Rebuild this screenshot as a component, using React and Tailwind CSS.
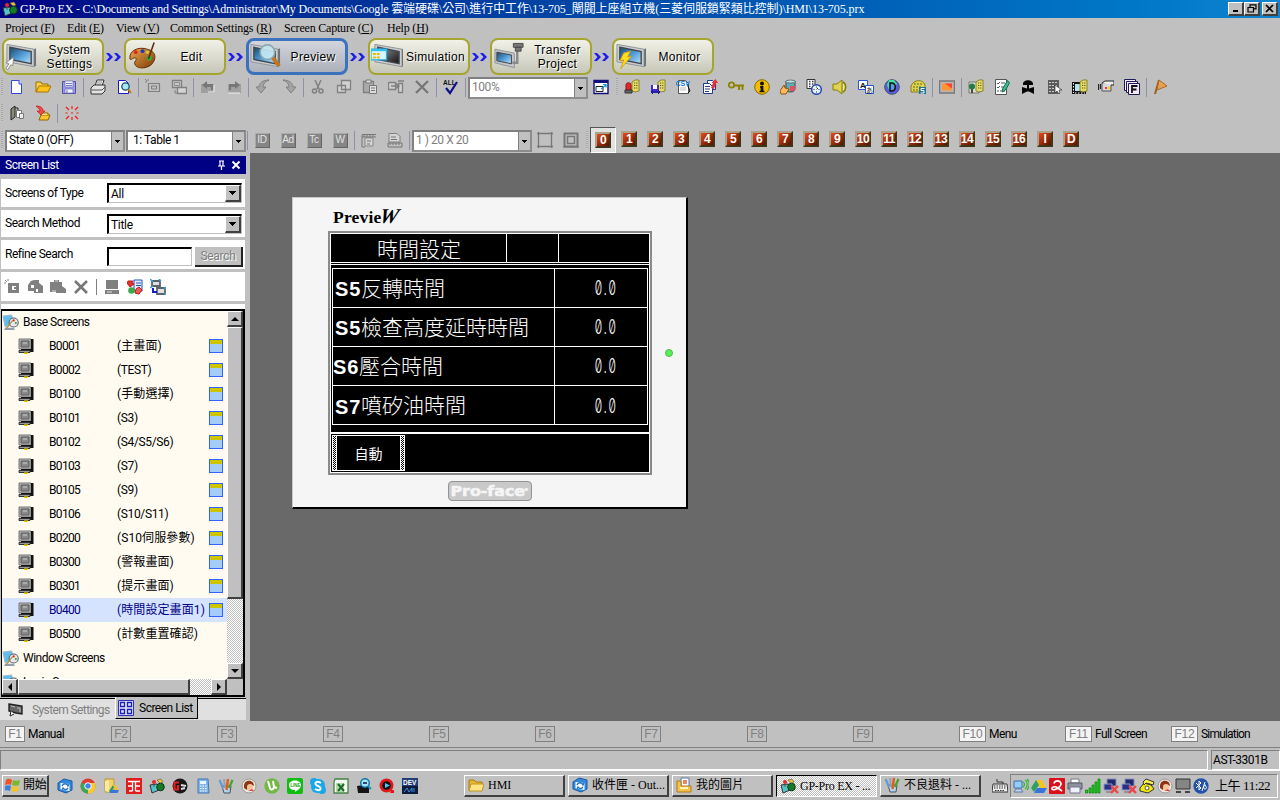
import React from 'react';

const UI = "font-['Roboto','Noto_Sans_CJK_TC',sans-serif]";
const SERIF = "font-['Liberation_Serif','Noto_Sans_CJK_TC',serif]";
const ARIAL = "font-['Liberation_Sans',sans-serif]";
const RAISED = 'border-t border-l border-white border-r-2 border-b-2 border-r-[#404040] border-b-[#404040] bg-[#c0c0c0]';
const DITHER = 'bg-[repeating-conic-gradient(#ffffff_0_25%,#c0c0c0_0_50%)] bg-[length:2px_2px]';

function Svg({ s = 16, w, h, vb = '0 0 16 16', children }) {
  return (
    <svg width={w || s} height={h || s} viewBox={vb} className="block shrink-0" fill="none">
      {children}
    </svg>
  );
}

const Page = ({ x = 2, y = 1, w = 11, h = 14, c = '#2a2ad0', f = '#fff' }) => (
  <path d={`M${x + .5} ${y + .5}h${w - 4}l3 3v${h - 4}h-${w - 1}z`} fill={f} stroke={c} />
);
const Tag = ({ x = 8, y = 0 }) => (
  <g>
    <path d={`M${x} ${y + 3}l3-2 4 0v11l-4 1-3-1z`} fill="#e4dc62" stroke="#77701c" strokeWidth=".8" />
    <path d={`M${x + 2} ${y + 4}h4M${x + 2} ${y + 6.5}h4M${x + 2} ${y + 9}h4`} stroke="#5e5815" strokeDasharray="1.2 1" />
  </g>
);

const icons = {
  new: <><Page c="#3545d5" /><path d="M10 1v4h3" stroke="#3545d5" fill="#cdd8ff" /></>,
  open: <><path d="M1 13V3h5l1 2h6v3" fill="#f8d34a" stroke="#9a6d00" /><path d="M1 13l3-6h12l-3 6z" fill="#ffc21c" stroke="#a87400" /></>,
  save: <><path d="M1.5 2.5h13v12h-13z" fill="#9b9be0" stroke="#5050a8" /><path d="M4 2h8v6H4zM4 10h8v4H4z" fill="#f4f4ff" stroke="#6969b5" strokeWidth=".7" /><path d="M5 4.5h6M5 6.5h6M6 11v3" stroke="#7777bb" /></>,
  print: <><path d="M5 7l2-6h7l-2 6z" fill="#fff" stroke="#333" /><path d="M7 3h5M6.5 5h5" stroke="#888" /><path d="M1 9l3-3h11v6l-3 3H1z" fill="#e4e4e4" stroke="#333" /><path d="M2 11h10M12 11l3-3" stroke="#555" /></>,
  preview: <><Page c="#1818c0" /><circle cx="9.5" cy="7.5" r="3.7" fill="#a5e9f5" stroke="#1a4d72" strokeWidth="1.3" /><path d="M12 10l3 4" stroke="#c47a00" strokeWidth="2" /></>,
  gnew: <><path d="M3.500 4.500h11v8h-11z" stroke="#808080" strokeWidth="1.2" /><path d="M6.500 7h5v3h-5z" stroke="#808080" /><path d="M0 0l2 2M3 0v2M0 3h2" stroke="#808080" /></>,
  gcopy: <><path d="M1.500 1.500h9v7h-9z" fill="#c8c8c8" stroke="#808080" strokeWidth="1.3" /><path d="M3.500 3.500h5v3h-5z" stroke="#909090" /><path d="M6.500 8.500h9v6h-9z" stroke="#808080" strokeWidth="1.3" fill="#d4d4d4" /><path d="M4 11v3h2" stroke="#808080" /></>,
  gback: <><path d="M1 5h13v9H1z" fill="#a0a0a0" /><path d="M7 2L2 6l5 4V8h4v3h2V5H7z" fill="#777" /><path d="M8 13h6V6" stroke="#efefef" /></>,
  gfwd: <><path d="M2 5h13v9H2z" fill="#a0a0a0" /><path d="M9 2l5 4-5 4V8H5v3H3V5h6z" fill="#777" /><path d="M2 14h12" stroke="#efefef" /></>,
  undo: <path d="M14 1C8 1 4 4 4 8H1l5 6 5-6H8c0-3 2-5 6-7z" fill="#a4a4a4" stroke="#808080" />,
  redo: <path d="M2 1c6 0 10 3 10 7h3l-5 6-5-6h3C8 5 6 3 2 1z" fill="#a4a4a4" stroke="#808080" />,
  cut: <><path d="M5 1l4 9M11 1L7 10" stroke="#808080" strokeWidth="1.5" /><circle cx="4.500" cy="12" r="2" stroke="#808080" strokeWidth="1.5" /><circle cx="11" cy="12" r="2" stroke="#808080" strokeWidth="1.5" /></>,
  copy: <path d="M5.500 1.500h9v9h-9zM1.500 6.500h8v7h-8z" fill="#d0d0d0" stroke="#808080" strokeWidth="1.3" />,
  paste: <><path d="M1.500 2.500h10v11h-10z" fill="#aaa" stroke="#808080" strokeWidth="1.3" /><path d="M4 1h5v3H4z" fill="#ddd" stroke="#777" /><path d="M7.500 6.500h7v8h-7z" fill="#ddd" stroke="#777" /><path d="M9 9h4M9 11.500h4" stroke="#777" /></>,
  dup: <><path d="M.5 3.500h7v7h-7zM10.500 4.500h4v9h-4z" fill="#cfcfcf" stroke="#808080" strokeWidth="1.3" /><path d="M3 7h7M8 4.500L11 7 8 9.500M10 2h6" stroke="#808080" strokeWidth="1.4" /></>,
  del: <path d="M2 2l12 12M14 2L2 14" stroke="#777" strokeWidth="2.300" />,
  all: <><text x="0" y="5.500" fontSize="6.500" fontWeight="700" fontFamily="Liberation Sans" fill="#111">ALL</text><path d="M3 9l4 5 7-11" stroke="#10108a" strokeWidth="2.200" /></>,
  ext: <><path d="M1 1.500h14v13H1z" fill="#fff" stroke="#10107c" strokeWidth="1.400" /><path d="M1 1h14v3H1z" fill="#10107c" /><path d="M3 7.500h7v5H3z" stroke="#222" /><path d="M8 10l5-4M10 5.500h3v3" stroke="#1094d0" strokeWidth="1.200" /></>,
  alarm: <><Tag /><path d="M2 11V6c0-3 5-3 5 0v5z" fill="#e32828" stroke="#8e1010" /><path d="M1 11h7v3H1z" fill="#666" stroke="#333" /></>,
  savetag: <><Tag /><path d="M1 6h8v8H1z" fill="#4228d8" /><path d="M3 6h4v4H3z" fill="#fff" /><path d="M1 13h9M3 11l-2 2 2 2M8 11l2 2-2 2" stroke="#14147a" /></>,
  csv: <><Page c="#555" /><path d="M4 9h6M4 11h6" stroke="#bbb" /><path d="M11 5l3 7-2 2" stroke="#111" /><text x="-.5" y="6.500" fontSize="7" fontWeight="700" fontFamily="Liberation Sans" fill="#0878d8">CSV</text></>,
  pages: <><Page x={5} y={1} w={9} h={10} c="#223a88" /><Page x={1} y={4} w={10} h={11} c="#223a88" /><path d="M3 7.500h5M3 10h5M3 12.500h4" stroke="#223a88" /><path d="M9 9l2-5-1.500 0 4-4 2.500 4h-2l-2 6z" fill="#f03030" /></>,
  key: <><circle cx="3.500" cy="6" r="2.700" stroke="#8c8400" strokeWidth="1.800" /><path d="M6 6.500h10M11 7v4M14.500 7v4" stroke="#8c8400" strokeWidth="2" /></>,
  info: <><circle cx="8" cy="8" r="7.300" fill="#f0bd00" stroke="#8b6a00" /><circle cx="8" cy="4.500" r="2" fill="#111" /><path d="M8 7v6" stroke="#111" strokeWidth="2.800" /><path d="M5.500 12.500h5M6 8h2" stroke="#111" strokeWidth="1.500" /></>,
  hand: <><path d="M6 2h9v8c0 4-9 4-9 0z" fill="#5faeb4" stroke="#444" /><ellipse cx="10.500" cy="2.500" rx="4.500" ry="1.500" fill="#b8e4e6" stroke="#555" strokeWidth=".7" /><path d="M10 7h5v5h-5z" fill="#e0505e" /><path d="M0 12l4-6 1 3 4 1-3 5H1z" fill="#ffb85b" stroke="#8d5314" /></>,
  clock: <><path d="M1 .5h8v9H1z" fill="#fff" stroke="#333" /><path d="M3 2.500h1.500M6 2.500h1.500M3 5h1.500M6 5h1.500M3 7.500h1.500" stroke="#333" strokeWidth="1.300" /><circle cx="10.500" cy="10.500" r="4.800" fill="#e8f1ff" stroke="#2348b7" strokeWidth="1.500" /><path d="M10.500 7.500v1M10.500 12.500v1M7.500 10.500h1M12.500 10.500h1M10.500 10.500l1.500-1.500" stroke="#333" /></>,
  speaker: <><path d="M1 5h4l5-4v14l-5-4H1z" fill="#dfd450" stroke="#847a08" /><path d="M11 3c3.500 2 3.500 8 0 10" fill="#f6eb85" stroke="#847a08" strokeWidth="1.500" /></>,
  lang: <><path d="M.5 1.500h9v9h-9z" fill="#fff" stroke="#2457dc" /><path d="M7.500 6.500h8v8h-8z" fill="#fff" stroke="#2457dc" /><text x="2" y="8.500" fontSize="8" fontWeight="700" fontFamily="Liberation Sans" fill="#111">A</text><text x="8" y="13.500" fontSize="7" fontFamily="Noto Sans CJK JP" fill="#111">あ</text></>,
  globe: <><circle cx="8" cy="8" r="7.300" fill="#5b5bed" stroke="#445066" /><path d="M5 1l5 0 3 4-4 6-4 0-2-5z" fill="#43dfa0" /><path d="M6 4v8h1.500c5 0 5-8 0-8z" fill="#5f9bd9" stroke="#111" strokeWidth="1.500" /></>,
  dial: <><path d="M1 7c3-7 12-7 14-1v7H1z" fill="#ded452" stroke="#857d13" /><path d="M4 5h8M3 8h8M3 11h5" stroke="#6d6610" strokeDasharray="2 1" /><path d="M9 8h7v7H9z" fill="#246f98" /><path d="M14.500 9.500h-3.500v2h3v2.500h-3.500" stroke="#fff" /></>,
  orange: <><path d="M.5 2h15v12H.5z" fill="#b6b6b6" stroke="#777" strokeWidth="1.500" /><path d="M3 4.500h10v7H3z" fill="#ff9430" /><path d="M6 4.500h7v5z" fill="#ff4038" /></>,
  treetag: <><path d="M1 3h10v11H1z" fill="#d2e0dc" stroke="#777" /><path d="M4 9v5" stroke="#5e4a18" strokeWidth="2" /><circle cx="4" cy="7.500" r="3" fill="#267b43" /><Tag /></>,
  note: <><path d="M1.500.5h11v15h-11z" fill="#fff" stroke="#555" /><path d="M3 4l1 1 2-2M7 4h4M3 8l1 1 2-2M7 8h3M3 12h2M6 12h5" stroke="#555" /><path d="M13.500 1.500l-5 8.500 0 3 3-2 4-7z" fill="#42b88d" stroke="#08734e" /></>,
  valve: <path d="M3 5c0-5 10-5 10 0v1H9v3.500L14 8v7l-5-2.500H7L2 15V8l5 1.500V6H3z" fill="#050505" />,
  keypad: <><path d="M2 1h11v14H2z" fill="#5c5c5c" /><path d="M3 3.500h9M3 6.500h9M3 9.500h6M3 12.500h6" stroke="#c8c8c8" strokeDasharray="2 1" /><path d="M9 6v8l2-2 2 3 1-1-1-3h3z" fill="#fff" stroke="#333" strokeWidth=".7" /></>,
  film: <><path d="M0 3h14v12H0z" fill="#111" /><path d="M3 5h7v7H3z" fill="#b9e2e9" /><path d="M1.500 4v10" stroke="#fff" strokeDasharray="1.500 1.500" /><path d="M3 14h10" stroke="#fff" strokeDasharray="1.500 1.500" /><Tag x={8} /></>,
  camera: <><path d="M4 4h9v8H4z" fill="#d8d8d8" stroke="#555" /><path d="M4 4l3-2h9v4h-3" fill="#eee" stroke="#222" /><path d="M0.500 5v6M2.500 5v5" stroke="#222" strokeWidth="1.200" /><path d="M7 9h2" stroke="#f33" strokeWidth="2" /><path d="M10 9h2" stroke="#fc0" strokeWidth="2" /></>,
  fbox: <><path d="M.5.5h11v11H.5z" fill="#f8e9f8" stroke="#1b1b57" /><path d="M2.500 2.500h11v11h-11z" fill="#f8e9f8" stroke="#1b1b57" /><path d="M4.500 4.500h11v11h-11z" fill="#f8e9f8" stroke="#1b1b57" /><path d="M8 14V7h5.500M8 10.500h4.500" stroke="#111" strokeWidth="1.800" /></>,
  flag: <><path d="M6 1L2 15" stroke="#9e5d22" strokeWidth="2" /><path d="M6 1l8 6-10 4z" fill="#eaa050" stroke="#a66b28" /></>,
  book: <><path d="M2 4l4-3v11l-4 3z" fill="#8b8b73" stroke="#222" /><path d="M6 3h3v3" stroke="#222" /><path d="M7.500 5.500h5v7h-5z" fill="#fff" stroke="#777" /><path d="M10.500 8.500h4v5h-4z" fill="#eee" stroke="#777" /></>,
  redopen: <><path d="M4 15l2-5h9l-2 5z" fill="#ffc72c" stroke="#8d6400" /><path d="M6 10V8h7v2" fill="#ffe98b" stroke="#8d6400" /><path d="M1 1c5 0 7 2 7 5h2l-4 4-4-4h3C5 4 3 3 1 1z" fill="#f24848" stroke="#c41414" strokeWidth=".7" /></>,
  star: <path d="M8 1v3M8 12v3M1.500 8h2M12.500 8h2M2 2l3 3M14 2l-3 3M2 14l3-3M14 14l-3-3M7 8h2" stroke="#f01818" strokeWidth="1.200" />,
  ruler1: <><path d="M4 6h8v8H4z" fill="#d4d4d4" stroke="#888" /><path d="M1 2.500h14M1 5h14" stroke="#777" /><path d="M3 3v2M6 3v2M9 3v2M12 3v2M1 3v12h3M6 9h4M6 12h3" stroke="#777" /></>,
  ruler2: <><path d="M2 1.500h8l3 3V10H2z" fill="#d4d4d4" stroke="#808080" /><path d="M4 5h5M4 7.500h6" stroke="#777" /><path d="M1 11h14v4H1zM3 11v2M6 11v2M9 11v2M12 11v2" stroke="#777" /></>,
  frame1: <path d="M1.500 0v16M14.500 0v16M0 1.500h16M0 14.500h16" stroke="#777" strokeWidth="1.300" />,
  frame2: <><path d="M1.500 1.500h13v13h-13z" stroke="#777" strokeWidth="2" /><path d="M4.500 4.500h7v7h-7z" stroke="#777" strokeWidth="1.500" /><path d="M0 15h16" stroke="#777" /></>,
};

const Cell = ({ n }) => <div className="flex h-6 w-[26px] shrink-0 items-center justify-center"><Svg>{icons[n]}</Svg></div>;
const Sep = () => <div className="flex h-[19px] w-[3px] shrink-0 justify-end pr-px"><div className="w-px bg-[#9090a8]" /></div>;
const Grip = ({ wide }) => (
  <div className={wide ? 'flex w-[5px] shrink-0 justify-center' : 'flex w-1 shrink-0 justify-center'}>
    <div className="h-[18px] w-0.5 bg-[repeating-linear-gradient(#a6a6a6_0_1px,#c8c8c8_1px_2px)]" />
  </div>
);

function Bar({ items }) {
  return items.map((n, i) => (n === '|' ? <Sep key={i} /> : n === ':' ? <Grip key={i} wide /> : <Cell key={i} n={n} />));
}

const Down = () => <svg width="7" height="4" viewBox="0 0 7 4" shapeRendering="crispEdges"><path d="M0 0h7L3.500 4z" fill="#000" /></svg>;

function Combo({ text, gray, className = 'mt-0.5 w-[120px]', textClass = 'pl-0.5' }) {
  return (
    <div className={`${className} flex h-[22px] shrink-0 border-2 border-[#808080] border-r-[#8c8c8c] border-b-[#8c8c8c] bg-white`}>
      <div className={`${textClass} flex-1 text-[12px] leading-[16px] tracking-[-0.45px] whitespace-nowrap ${gray ? 'text-[#808080]' : 'text-black'}`}>{text}</div>
      <div className="flex w-3 items-center justify-center border-l border-[#808080] bg-[#c0c0c0]"><svg width="5" height="3" viewBox="0 0 5 3" shapeRendering="crispEdges"><path d="M0 0h5L2.500 3z" fill="#000" /></svg></div>
    </div>
  );
}

const Monitor = ({ dark }) => (
  <>
    <path d="M2 2l28 5v18L2 20z" fill="#c9cdd0" stroke="#8f9498" />
    <path d="M30 7l2-1v18l-2 1z" fill="#6d7275" />
    <path d="M5 5l22 4.500v12.500L5 17.500z" fill={dark ? 'url(#scrDark)' : 'url(#scrBlue)'} stroke="#42484d" strokeWidth="1.400" />
  </>
);

const modeIcons = {
  sys: <><Monitor /><path d="M1 27l3-5-3-1 8-6-1 9-2-1-3 5z" fill="#fff" stroke="#777" strokeWidth=".8" /></>,
  edit: <><path d="M3 17C2 8 12 4 21 7c9 2 10 10 4 16-6 5-16 4-17-1-1-3 3-4 1-6-2-1-5 3-6 1z" fill="url(#wood)" stroke="#643000" /><circle cx="9" cy="10" r="2" fill="#e02818" /><circle cx="16" cy="9" r="2" fill="#2038c4" /><circle cx="21" cy="10" r="1.800" fill="#d8c728" /><circle cx="23" cy="16" r="2.600" fill="#23b83a" /><path d="M28 0l-6 17" stroke="#5a2b16" strokeWidth="1.600" /></>,
  prev: <><Monitor /><path d="M24 15l7 9" stroke="#c2751a" strokeWidth="4" /><circle cx="19" cy="10" r="7.500" fill="#c7eaf2" fillOpacity=".9" stroke="#8ca8b4" strokeWidth="1.700" /></>,
  sim: <><g transform="translate(2 0)"><Monitor dark /></g><path d="M0 7h16v11H0z" fill="#d8f4ff" stroke="#25aee8" strokeWidth="1.300" /><path d="M0 7h16v2H0z" fill="#2ac3f2" /><path d="M2 11h3v2H2zM6 11h3v2H6zM2 14.500h3v2H2zM6 14.500h3v2H6z" fill="#e9ba00" /></>,
  xfer: <><path d="M2 7l20 4v15L2 21z" fill="#c3c7cb" stroke="#8f9498" /><path d="M4 10l15 3v9L4 19z" fill="url(#scrBlue)" stroke="#444" /><path d="M20 21h5V9" stroke="#8a8a8a" strokeWidth="2.500" /><path d="M21 1h10v4H21zM23 5h6v4h-6z" fill="#777" stroke="#4b4b4b" /></>,
  mon: <><Monitor /><path d="M9 11l7-2-3 6 4-1-11 13 3-9-4 1z" fill="#ffde22" stroke="#d59900" strokeWidth=".8" /></>,
};

function Mode({ icon, lines, active }) {
  return (
    <div className={`flex h-[37px] w-[102px] shrink-0 items-center rounded-lg ${active ? 'border-[3px] border-[#3b72bd] bg-linear-to-b from-[#d2d5dc] to-[#adb1bb]' : 'border-2 border-[#a5a52f] bg-linear-to-b from-[#f1f1e7] to-[#c7c7b9] pl-px'}`}>
      <svg width="32" height="29" viewBox="0 0 33 29" fill="none" className="shrink-0">{modeIcons[icon]}</svg>
      <div className={`${ARIAL} flex-1 text-center text-[12px] leading-[14px] tracking-[0.3px] whitespace-nowrap text-black [text-shadow:1px_1px_0_#fff]`}>
        {lines.map((l) => <div key={l}>{l}</div>)}
      </div>
    </div>
  );
}

const Chevron = () => (
  <div className="flex w-5 shrink-0 items-center justify-center">
    <svg width="16" height="10" viewBox="0 0 16 10" fill="none"><path d="M0 1h3l4 4-4 4H0l3.500-4zM8 1h3l4 4-4 4H8l3.500-4z" fill="#1c1ce8" /></svg>
  </div>
);

const NumBtn = ({ t, on }) => (
  <div className={`flex h-[26px] w-[26px] shrink-0 items-center justify-center pb-0.5 ${on ? 'border border-white border-t-[#555] border-l-[#555] bg-[#e2e2e0] pb-px' : ''}`}>
    <div className={`${ARIAL} flex h-4 w-4 items-center justify-center border-2 border-t-[#aaa28a] border-l-[#aaa28a] border-r-[#3f3518] border-b-[#3f3518] bg-linear-to-br from-[#e84c18] to-[#581200] text-[12px] leading-none font-bold tracking-[-0.5px] text-white`}>{t}</div>
  </div>
);

const GrayBtn = ({ t }) => (
  <div className="flex w-[26px] shrink-0 items-center justify-center">
    <div className={`${ARIAL} flex h-[15px] w-[15px] items-center justify-center border border-t-[#aaa] border-l-[#aaa] border-r-[#666] border-b-[#666] bg-[#858585] text-[10px] leading-none tracking-[-0.3px] text-[#e4e4e4]`}>{t}</div>
  </div>
);

const ROWS = [
  ['B0001', '(主畫面)'], ['B0002', '(TEST)'], ['B0100', '(手動選擇)'], ['B0101', '(S3)'], ['B0102', '(S4/S5/S6)'],
  ['B0103', '(S7)'], ['B0105', '(S9)'], ['B0106', '(S10/S11)'], ['B0200', '(S10伺服參數)'], ['B0300', '(警報畫面)'],
  ['B0301', '(提示畫面)'], ['B0400', '(時間設定畫面1)'], ['B0500', '(計數重置確認)'],
];

const PcIcon = () => (
  <Svg><path d="M1 1h12v10H1z" fill="#b6b6b6" stroke="#777" /><path d="M13 1h2.500v13H3v-3h10z" fill="#111" /><path d="M3 3h8v6H3z" fill="#8a8a8a" stroke="#5a5a5a" /><path d="M5 5h4" stroke="#ccc" /><path d="M1 12.500h11v2H1z" fill="#999" stroke="#333" /><path d="M6 15.200h4" stroke="#e4d000" strokeWidth="1.600" /></Svg>
);
const GroupIcon = () => (
  <Svg s={17}><path d="M1 2l8-1 2 8-8 3z" fill="#5abff0" stroke="#9bb8c9" /><path d="M3 13h8l1 2H2z" fill="#8ea0b0" /><circle cx="11" cy="8" r="4.300" fill="#e9e9e9" stroke="#58616b" /><circle cx="11" cy="6" r="1" fill="#d22" /><circle cx="13" cy="8.500" r="1" fill="#2a4" /><path d="M4 14l6-8" stroke="#c88630" /></Svg>
);
const Group = ({ t }) => (
  <div className="flex h-6 shrink-0 items-center"><GroupIcon /><span className="ml-1 text-[12px] tracking-[-0.5px] whitespace-nowrap">{t}</span></div>
);

const ScrollBtn = ({ d }) => (
  <div className={`flex h-4 w-4 shrink-0 items-center justify-center ${RAISED}`}>
    <svg width="8" height="8" viewBox="0 0 8 8"><path d={d} fill="#000" /></svg>
  </div>
);

const PanelSelect = ({ label, value }) => (
  <div className="flex h-full items-center">
    <span className="w-[106px] pb-px pl-1 text-[12px] tracking-[-0.45px]">{label}</span>
    <div className="flex h-5 w-[135px] border-t-2 border-l-2 border-r border-b border-t-black border-l-black border-r-[#c0c0c0] border-b-[#c0c0c0] bg-white">
      <span className="flex-1 pl-0.5 text-[12px] leading-[18px] tracking-[-0.3px]">{value}</span>
      <div className={`flex w-4 items-center justify-center ${RAISED}`}><Down /></div>
    </div>
  </div>
);

function SidePanel() {
  return (
    <div className="flex w-[250px] shrink-0 flex-col bg-[#c0c0c0] pt-[3px]">
      <div className="flex h-[18px] w-[246px] items-center bg-[#000084] pl-[5px] text-[12px] tracking-[-0.5px] text-white">
        <span className="flex-1">Screen List</span>
        <svg width="24" height="10" viewBox="0 0 24 10" fill="none"><path d="M2 1h5M3 1v5M6 1v5M1 6h7M4.500 6v4" stroke="#fff" strokeWidth="1.200" /><path d="M15.500 1.500l7 7M22.500 1.500l-7 7" stroke="#fff" strokeWidth="2" /></svg>
        <span className="w-[5px]" />
      </div>
      <div className="mt-[5px] ml-px flex w-[244px] flex-col gap-[3px]">
        <div className="h-7 bg-white"><PanelSelect label="Screens of Type" value="All" /></div>
        <div className="h-[27px] bg-white"><PanelSelect label="Search Method" value="Title" /></div>
        <div className="flex h-[29px] items-center bg-white">
          <span className="w-[106px] pb-0.5 pl-1 text-[12px] tracking-[-0.45px]">Refine Search</span>
          <div className="mt-1 h-[19px] w-[85px] border-t-2 border-l-2 border-r border-b border-t-black border-l-black border-r-[#c0c0c0] border-b-[#c0c0c0]" />
          <div className="mt-1 ml-[3px] flex h-5 w-12 items-center justify-center border-r-2 border-b-2 border-r-[#222] border-b-[#222] bg-[#c0c0c0] text-[12px] tracking-[-0.3px] text-[#808080] [text-shadow:1px_1px_0_#fff]">Search</div>
        </div>
        <div className="flex h-[29px] items-center gap-[7px] bg-white pl-[3px]">
          <Svg><path d="M4 4h11v10H4z" fill="#808080" /><path d="M8 7h4v4H8z" fill="#fff" /><path d="M10 8h2v2h-2z" fill="#808080" /><path d="M1 1l2 2M4 0v2M0 4h2" stroke="#808080" /></Svg>
          <Svg><path d="M4 2l3-1h5v3l4 3v7H7v-2H1V6z" fill="#808080" /><path d="M4 6h3v3H4zM9 10h2v3H9z" fill="#fff" /></Svg>
          <Svg><path d="M0 3h4V1h5v2h3v4l4 3v4H6v-1H0z" fill="#808080" /><path d="M5 2h3M2 12h4" stroke="#ddd" /></Svg>
          <Svg><path d="M2 2l12 12M14 2L2 14" stroke="#777" strokeWidth="2.600" /></Svg>
          <div className="h-4 w-px bg-[#808080]" />
          <Svg><path d="M2 1h12v9H2zM1 11h14v4H1z" fill="#808080" /><path d="M3 13h5" stroke="#ddd" /></Svg>
          <Svg><path d="M7 1h8v11H7z" fill="#e6efff" stroke="#2253b0" /><path d="M9 4h5M9 6.500h5" stroke="#2253b0" /><path d="M1 2l5 0-1 2 2 1-4 3-3-4z" fill="#e83030" stroke="#c01818" /><path d="M9 10l3-2 3 3-3 4-4-1z" fill="#f05858" stroke="#c01818" /><circle cx="4.500" cy="11.500" r="3.300" fill="#3ba84b" /></Svg>
          <Svg><path d="M2 3l1-1h6l1 1v4H2zM7 9h7l1 1v4l-1 1H7z" fill="#e0e0e0" stroke="#59646b" strokeWidth="1.800" /><path d="M0 0l3 3M9 0l2 2M0 9l3-2M16 8l-2 2M16 16l-2-1" stroke="#2a9ce0" strokeWidth="1.500" /><path d="M3 9v4h4" stroke="#1818d0" strokeWidth="2" /></Svg>
        </div>
      </div>
      <div className="mt-[3px] ml-px h-[5px] w-[244px] bg-white" />
      <div className="ml-px flex h-[388px] w-[244px] flex-col border-t-2 border-r-2 border-b-2 border-l border-black">
        <div className="flex h-[368px]">
          <div className="w-[226px] overflow-hidden bg-[#fffbf0]">
            <div className="-mt-px h-6"><Group t="Base Screens" /></div>
            {ROWS.map(([id, name], i) => (
              <div key={id} className={`flex h-6 items-center pl-4 text-[12px] whitespace-nowrap ${i === 11 ? 'bg-[#d6e3ff] text-[#000084]' : ''}`}>
                <PcIcon />
                <span className="ml-[15px] w-[68px] tracking-[-0.65px]">{id}</span>
                <span className={/^[ -~]+$/.test(name) ? 'w-[92px] tracking-[-0.35px]' : 'w-[92px] tracking-[0.1px]'}>{name}</span>
                {i < 12 && <div className="flex h-[14px] w-[14px] shrink-0 flex-col border border-[#3163ff] bg-[#a5cbf7]"><div className="h-1 bg-[#cec700]" /></div>}
              </div>
            ))}
            <Group t="Window Screens" />
            <Group t="Logic Screens" />
          </div>
          <div className={`flex w-4 flex-col ${DITHER}`}>
            <ScrollBtn d="M0 6h8L4 2z" />
            <div className={`h-[272px] ${RAISED}`} />
            <div className="flex-1" />
            <ScrollBtn d="M0 2h8L4 6z" />
          </div>
        </div>
        <div className="flex h-4">
          <div className={`flex w-[226px] ${DITHER}`}>
            <ScrollBtn d="M6 0v8L2 4z" />
            <div className={`w-[172px] ${RAISED}`} />
            <div className="flex-1" />
            <ScrollBtn d="M2 0v8l4-4z" />
          </div>
          <div className="w-4 bg-[#c0c0c0]" />
        </div>
      </div>
      <div className="mt-px flex h-[22px] w-[246px] bg-[#e0e0e0] text-[12px]">
        <div className="flex w-[115px] items-center border-t border-black pl-2 tracking-[-0.6px] text-[#808080]">
          <Svg><path d="M1 2l13 2v8L8 11 1 9z" fill="#666" stroke="#222" strokeWidth="1.400" /><path d="M3 4l4 1M9 6h3v4" stroke="#bbb" /><path d="M3 9l-1 5 4-2" fill="#fff" stroke="#222" /></Svg>
          <span className="ml-2 whitespace-nowrap">System Settings</span>
        </div>
        <div className="-mt-px flex h-[22px] w-[83px] items-center border-r border-b border-l border-black border-l-white bg-[#c0c0c0] pl-0.5">
          <Svg><path d="M.5.5h15v15H.5z" fill="#dfe4ff" stroke="#3030b8" /><path d="M2.500 2.500h4v4h-4zM9.500 2.500h4v4h-4zM2.500 9.500h4v4h-4zM9.500 9.500h4v4h-4z" stroke="#2020b0" strokeWidth="1.300" /></Svg>
          <span className="ml-[5px] tracking-[-0.5px] whitespace-nowrap">Screen List</span>
        </div>
        <div className="flex-1 border-t border-black" />
      </div>
    </div>
  );
}

const LINES = [['S5', '反轉時間'], ['S5', '檢查高度延時時間'], ['S6', '壓合時間'], ['S7', '噴矽油時間']];

function Device() {
  return (
    <div className="flex h-[312px] w-[396px] flex-col items-center border-t border-l border-r-2 border-b-2 border-t-[#c8c8c8] border-l-[#c8c8c8] border-r-black border-b-black bg-[#f5f5f5]">
      <div className="flex h-[33px] w-full items-end pb-[3px] pl-10">
        <div className="flex items-baseline font-['Liberation_Serif',serif] text-[17.500px] leading-[22px] font-bold text-black">
          <span className="inline-block tracking-[0.2px]">Previe</span><span className="-ml-1 inline-block origin-bottom -skew-x-12 text-[21px] leading-[18px] italic">W</span>
        </div>
      </div>
      <div className="ml-px w-[324px] border-2 border-[#8a8a8a] bg-white p-px">
        <div className="flex h-[238px] flex-col bg-black text-white">
          <div className="flex h-[29px] border-b border-white font-['Noto_Sans_CJK_TC',sans-serif] text-[21px] leading-[28px] font-light">
            <div className="w-[176px] border-r border-white pl-px text-center">時間設定</div>
            <div className="w-[52px] border-r border-white" />
          </div>
          <div className="mt-px h-px shrink-0 bg-white" />
          <div className="mx-px mt-[3px] h-[157px] border border-white">
            {LINES.map(([a, b], i) => (
              <div key={i} className={`flex h-[39px] ${i < 3 ? 'border-b border-white' : ''}`}>
                <div className={`flex w-[222px] items-center border-r border-white whitespace-nowrap ${i === 2 ? '' : 'pl-0.5'}`}>
                  <span className={`${ARIAL} mt-0.5 text-[20px] leading-none font-bold tracking-[0.8px]`}>{a}</span>
                  <span className="mb-0.5 font-['Noto_Sans_CJK_TC',sans-serif] text-[21px] leading-none font-light">{b}</span>
                </div>
                <div className="flex flex-1 items-center justify-center pl-[11px]"><span className="inline-block scale-x-[0.6] font-['Inter',sans-serif] text-[20px] leading-none font-light tracking-[3px] slashed-zero">0.0</span></div>
              </div>
            ))}
          </div>
          <div className="mt-[7px] h-0.5 shrink-0 bg-white" />
          <div className="flex flex-1 p-px">
            <div className="flex h-9 w-[73px] border border-white">
              <div className="w-1 border-r border-white bg-[repeating-conic-gradient(#fff_0_25%,#000_0_50%)] bg-[length:2px_2px]" />
              <div className="flex flex-1 items-center justify-center font-['Noto_Sans_CJK_TC',sans-serif] text-[14px] leading-none">自動</div>
              <div className="w-1 border-l border-white bg-[repeating-conic-gradient(#fff_0_25%,#000_0_50%)] bg-[length:2px_2px]" />
            </div>
          </div>
        </div>
      </div>
      <div className="mt-[6px] flex h-5 w-[84px] items-center justify-center rounded border border-[#949494] bg-[#c9c9c9] font-['DejaVu_Sans',sans-serif] text-[14px] leading-none font-bold text-[#f5f5f5]"><span className="inline-block scale-x-[1.13] whitespace-nowrap [-webkit-text-stroke:0.6px_#f5f5f5]">Pro-face<span className="-ml-px align-[4px] text-[7px]">•</span></span></div>
    </div>
  );
}

const FKEYS = [['F1', 'Manual', 1], ['F2'], ['F3'], ['F4'], ['F5'], ['F6'], ['F7'], ['F8'], ['F9'], ['F10', 'Menu', 1], ['F11', 'Full Screen', 1], ['F12', 'Simulation', 1]];

const GpIcon = ({ s = 16 }) => (
  <Svg s={s}><path d="M1 7l7-1 2 6-7 3z" fill="#54c4cc" stroke="#333" /><circle cx="5" cy="4" r="2" fill="#e32929" /><circle cx="11.500" cy="9" r="3.800" fill="#187a28" stroke="#083d12" /><path d="M8 2l4-1 2 3-3 1z" fill="#f0c228" stroke="#555" strokeWidth=".6" /><path d="M5 6v3" stroke="#555" /></Svg>
);
const Pens = () => <Svg><path d="M4 8h9l-1 7H6z" fill="#b4d2e6" stroke="#456" /><path d="M5 10L1.500 2" stroke="#5f9ad8" strokeWidth="2.200" /><path d="M7 10L6 1" stroke="#9a9fa8" strokeWidth="2" /><path d="M8.500 12l1.500-11" stroke="#e05c20" strokeWidth="2.400" /><path d="M11 10l3.500-8" stroke="#48a030" strokeWidth="2.200" /></Svg>;
const Mail = () => <Svg><path d="M1 5l6-4 8 2v9l-6 3-8-3z" fill="#2f87de" stroke="#175ca4" /><path d="M3.500 5l9 1v7l-9-1.500z" fill="#fff" /><path d="M5 8c1-3 5-3 6 0l1-2M11 10c-1 2-4 2-5 0l-1 2" stroke="#2671be" strokeWidth="1.300" /></Svg>;
const Folder = () => <Svg><path d="M1 13V3h5l2 2h6v8z" fill="#e8b730" stroke="#a77b10" /><path d="M3 7h13l-2 7H1z" fill="#ffe382" stroke="#c29420" /></Svg>;
const Girl = () => <Svg><circle cx="8" cy="8" r="7" fill="#f3e7dc" stroke="#999" /><path d="M3 8c0-7 10-7 10 0l-2-1-4 1-1 4-3-2z" fill="#8b3514" /><circle cx="9" cy="9" r="3" fill="#f5c49a" /><path d="M7 13l4-2 2 2z" fill="#d44" /></Svg>;

const quick = [
  <Mail />,
  <Svg><circle cx="8" cy="8" r="7.500" fill="#e03a2c" /><path d="M8 8L1.500 4.500A7.500 7.500 0 0 0 8 15.500z" fill="#38a852" /><path d="M8 8v7.500A7.500 7.500 0 0 0 15 5H8z" fill="#fbcb2c" /><circle cx="8" cy="8" r="3.300" fill="#4084ee" stroke="#fff" /></Svg>,
  <Svg><path d="M2 1h9v13H2z" fill="#f1d271" stroke="#bc9630" /><path d="M2 3l4-1v12l-4-1z" fill="#ffe99d" /><path d="M10 7l1 2-3 6-2-2z" fill="#2a9d57" /><path d="M10 7h3l3 6h-3z" fill="#f6c228" /><path d="M8 12h8l-1.500 3H6.500z" fill="#3675df" /></Svg>,
  <Svg><path d="M0 0h16v16H0z" fill="#e01c1c" /><path d="M2 3.500h12M6.500 3v10M9.500 3v10M2 8h4.500M9.500 8H14M3 13h3.500M9.500 13H14" stroke="#fff" strokeWidth="1.300" /></Svg>,
  <GpIcon />,
  <Svg><circle cx="8" cy="8" r="7.500" fill="#181818" /><path d="M7 4.500H2.500v7H6V8H5" stroke="#e12020" strokeWidth="2.200" /><path d="M9 7l5 1M9 11l4-1" stroke="#ddd" strokeWidth="2" /></Svg>,
  <Svg><path d="M3 1h10l1 14H3z" fill="#82b5ea" stroke="#4275b2" /><path d="M5 3h6v3H5z" fill="#e8f6ff" /><path d="M5 8h7M5 10.500h7M5 13h7" stroke="#fff" strokeDasharray="1.500 1" /></Svg>,
  <Pens />,
  <Girl />,
  <Svg><circle cx="8" cy="8" r="7.700" fill="#73b845" /><path d="M4 3l2 7c1 3 4 1 4-1L9 3M10 9l3 1" stroke="#fff" strokeWidth="2" /></Svg>,
  <Svg><rect width="16" height="16" rx="2" fill="#12bd12" /><path d="M2 7c0-6 12-6 12 0 0 4-4 5-6 7v-2C4 12 2 10 2 7z" fill="#fff" /><text x="3.200" y="9" fontSize="4.500" fontWeight="700" fontFamily="Liberation Sans" fill="#12a812">LINE</text></Svg>,
  <Svg><rect x="1" y="1" width="14" height="14" rx="6" fill="#18a8e8" /><circle cx="4" cy="4" r="4" fill="#18a8e8" /><circle cx="12" cy="12" r="4" fill="#18a8e8" /><path d="M11 5c-5-3-8 1-3 3s2 6-3 3" stroke="#fff" strokeWidth="2" /></Svg>,
  <Svg><path d="M2 1h13v14H1V4z" fill="#f4faf0" stroke="#448446" strokeWidth="1.300" /><path d="M3 5h8v9H3z" fill="#b9d9aa" /><path d="M5 6l6 7M11 6l-6 7" stroke="#176b2c" strokeWidth="2" /></Svg>,
  <Svg><path d="M1 8l7-1 5 2v6H2z" fill="#151515" /><circle cx="9" cy="5" r="4.300" fill="#9fe4fa" stroke="#1277a6" strokeWidth="1.500" /><path d="M7 5h4" stroke="#114" strokeWidth="1.500" /><path d="M12 8l3 3" stroke="#1890c8" strokeWidth="2" /></Svg>,
  <Svg><circle cx="7.500" cy="7.500" r="7" fill="#e01818" /><path d="M12 12h3v3h-4z" fill="#e01818" /><circle cx="7.500" cy="7.500" r="4.300" fill="#111" /><path d="M6 5l5 2.500L6 10z" fill="#4cc4f4" /></Svg>,
  <Svg><path d="M0 0h16v16H0z" fill="#203e78" /><path d="M0 8h16v8H0z" fill="#0e1c3c" /><text x="1" y="7" fontSize="6.500" fontWeight="700" fontFamily="Liberation Sans" fill="#fff">DEV</text><path d="M2 14l3-4 2 4 3-4v4M12 10v4" stroke="#3b8edd" /></Svg>,
];

const NetX = () => <Svg><path d="M4 1h9v7H4z" fill="#202870" stroke="#8a90b8" /><path d="M1 6h8v6H1z" fill="#27308a" stroke="#9298bf" /><path d="M3 14h5" stroke="#667" /><path d="M8 8l7 7M15 8l-7 7" stroke="#ed4545" strokeWidth="2.400" /></Svg>;
const tray = [
  <Svg><path d="M1 3h8v7H1z" fill="#94cdf8" stroke="#3d70b2" /><path d="M3 11h5l2 3H1z" fill="#c2d7ea" stroke="#5c7ba4" /><path d="M10 4c2 1 2 3 0 5M12 2c3 2 3 6 0 9M14 1c3 3 3 7 0 11" stroke="#34b332" strokeWidth="1.200" /></Svg>,
  <Svg><path d="M5 2h6l5 9h-6z" fill="#f5c51f" /><path d="M5 2l3 5-5 7-3-4z" fill="#2fa260" /><path d="M6 10h10l-3 5H3z" fill="#3973df" /></Svg>,
  <Svg><rect width="16" height="16" rx="1" fill="#d8111b" /><path d="M5 5.500c1-3.500 6-3.500 7 0 .5 2-1 3-3 4.500s-5 2.500-6 1c-1-1.500 3-3.500 6-1l4 3" stroke="#fff" strokeWidth="1.600" /></Svg>,
  <Svg><path d="M4 1h8v4H4z" fill="#fff" stroke="#778" /><path d="M1 5h14v6H1z" fill="#8d929e" stroke="#555b68" /><path d="M3 9h10v6H3z" fill="#eef2ff" stroke="#778" /></Svg>,
  <Svg><path d="M.5 12h2v3h-2zM4 10h2v5H4zM7 7h2v8H7zM10 4h2v11h-2zM13 1h2v14h-2z" fill="#15dc15" stroke="#087708" strokeWidth=".7" /></Svg>,
  <NetX />, <NetX />,
  <Svg><path d="M1 10l4-5 7 2 3 4-6 4-8-2z" fill="#f4e900" stroke="#333" /><path d="M4 4l3-3 8 3-1 3-3-1-4-1-2 2z" fill="#f9f04a" stroke="#333" /><circle cx="8" cy="10" r="2" fill="#fff" stroke="#333" strokeWidth=".8" /></Svg>,
  <Girl />,
  <Svg><path d="M1 1h14v10H1z" fill="#858585" stroke="#333" /><path d="M1 13h5v2H1zM10 13h5v2h-5z" fill="#444" /></Svg>,
  <Svg><circle cx="8" cy="8" r="7.700" fill="#2452aa" /><path d="M3 5l5 5-2 2V3l2 2-5 5" stroke="#fff" /><path d="M9 13l3-9M13 7c-3 0-3 4-1 4s2-3 0-3" stroke="#fff" /></Svg>,
];

const tasks = [
  [<Folder />, 'HMI'], [<Mail />, '收件匣 - Out...'],
  [<Svg><path d="M5 1h8v9H5z" fill="#fff" stroke="#557baa" /><path d="M7 3h4v4H7z" fill="#e48570" /><path d="M1 4h4v5h10v6H1z" fill="#f5c347" stroke="#ac7b16" /><path d="M4 11h8" stroke="#fff3bc" strokeWidth="2" /></Svg>, '我的圖片'],
  [<GpIcon />, 'GP-Pro EX - ...', 1], [<Pens />, '不良退料 - ...'],
];

const Menu = ({ t, k, className }) => <span className={`${className} shrink-0 whitespace-nowrap`}>{t} (<span className="underline">{k}</span>)</span>;

const WinBtn = ({ d, sw = 2 }) => (
  <div className={`flex h-[14px] w-4 items-center justify-center ${RAISED}`}><svg width="10" height="9" viewBox="0 0 10 9" fill="none"><path d={d} stroke="#000" strokeWidth={sw} /></svg></div>
);

export default function App() {
  return (
    <div className={`${UI} flex h-[800px] w-[1280px] flex-col overflow-hidden bg-[#c0c0c0] text-black`}>
      <svg width="0" height="0" className="absolute"><defs>
        <linearGradient id="scrBlue" x1="0" y1="0" x2="1" y2="1"><stop offset="0" stopColor="#1b4a6a" /><stop offset=".5" stopColor="#4e9ad6" /><stop offset="1" stopColor="#b9e2fa" /></linearGradient>
        <linearGradient id="scrDark" x1="0" y1="0" x2="1" y2="1"><stop offset="0" stopColor="#9a9a9a" /><stop offset="1" stopColor="#111" /></linearGradient>
        <linearGradient id="wood" x1="0" y1="0" x2="1" y2="1"><stop offset="0" stopColor="#f1a94e" /><stop offset="1" stopColor="#7b3b08" /></linearGradient>
      </defs></svg>

      <div className={`${SERIF} flex h-[18px] shrink-0 items-center bg-linear-to-r from-[#000084] to-[#1084d0] pl-0.5 text-white`}>
        <GpIcon />
        <span className="ml-[2px] text-[12px] leading-none tracking-[-0.07px] whitespace-nowrap"><span className="tracking-[-0.21px]">GP-Pro EX - C:\Documents and Settings\Administrator\My Documents\Google </span>雲端硬碟\公司\進行中工作\13-705_閘閥上座組立機(三菱伺服鎖緊類比控制)\HMI\13-705.prx</span>
        <div className="ml-auto flex pr-0.5">
          <WinBtn d="M2 7h5" /><WinBtn sw={1.2} d="M3 3V.8h6v4H7M1 3.500h5.500v4.500H1z" /><div className="w-0.5" /><WinBtn sw={1.7} d="M1 1l7 7M8 1L1 8" />
        </div>
      </div>

      <div className={`${SERIF} flex h-5 shrink-0 items-center pl-[5px] text-[12px] tracking-[-0.2px]`}>
        <Menu t="Project" k="F" className="w-[62px]" /><Menu t="Edit" k="E" className="w-[49px]" /><Menu t="View" k="V" className="w-[54px]" />
        <Menu t="Common Settings" k="R" className="w-[114px]" /><Menu t="Screen Capture" k="C" className="w-[103px]" /><Menu t="Help" k="H" className="w-[60px]" />
      </div>

      <div className="flex h-[37px] shrink-0 pl-0.5">
        <Mode icon="sys" lines={['System', 'Settings']} /><Chevron />
        <Mode icon="edit" lines={['Edit']} /><Chevron />
        <Mode icon="prev" lines={['Preview']} active /><Chevron />
        <Mode icon="sim" lines={['Simulation']} /><Chevron />
        <Mode icon="xfer" lines={['Transfer', 'Project']} /><Chevron />
        <Mode icon="mon" lines={['Monitor']} />
      </div>

      <div className="flex h-6 shrink-0 items-center">
        <Grip />
        <Bar items={['new', 'open', 'save', '|', 'print', 'preview', '|', 'gnew', 'gcopy', '|', 'gback', 'gfwd', '|', 'undo', 'redo', '|', 'cut', 'copy', 'paste', 'dup', 'del', '|', 'all', '|']} />
        <Combo text="100%" gray className="mt-0.5 ml-px w-[120px]" />
        <Bar items={['ext', ':', 'alarm', 'savetag', 'csv', 'pages', 'key', 'info', 'hand', 'clock', 'speaker', 'lang', 'globe', 'dial', '|', 'orange', '|', 'treetag', 'note', 'valve', 'keypad', 'film', 'camera', 'fbox', '|', 'flag']} />
      </div>

      <div className="flex h-7 shrink-0 items-center">
        <Grip />
        <Bar items={['book', 'redopen', '|', 'star']} />
      </div>

      <div className="flex h-[26px] shrink-0 items-center">
        <Grip />
        <div className="w-px" />
        <Combo text="State 0 (OFF)" /><div className="w-px" />
        <Combo text="1: Table 1" textClass="pl-[5px]" />
        <Sep />
        <GrayBtn t="ID" /><GrayBtn t="Ad" /><GrayBtn t="Tc" /><GrayBtn t="W" />
        <Bar items={['|', 'ruler1', 'ruler2', '|']} />
        <Combo text="1 ) 20 X 20" gray className="mt-0.5 ml-px w-[120px]" />
        <Bar items={['frame1', 'frame2', ':']} />
        <div className="w-px" />
        {['0', '1', '2', '3', '4', '5', '6', '7', '8', '9', '10', '11', '12', '13', '14', '15', '16', 'I', 'D'].map((t, i) => <NumBtn key={t} t={t} on={i === 0} />)}
      </div>

      <div className="flex h-[568px] shrink-0">
        <SidePanel />
        <div className="flex flex-1 items-start bg-[#696969] pt-11 pl-[42px]">
          <div className="relative">
            <Device />
            <div className="absolute top-[152px] left-[373px] h-2 w-2 rounded-sm border border-[#50b850] bg-[#55f255]" />
          </div>
        </div>
      </div>

      <div className="flex h-[26px] shrink-0 items-center pl-[5px] text-[12px]">
        {FKEYS.map(([k, t, on]) => (
          <div key={k} className="flex w-[106px] shrink-0 items-center">
            <div className={`${ARIAL} flex h-4 items-center justify-center border border-[#808080] tracking-[-0.2px] text-[#808080] ${on ? 'bg-[#f4f4f4]' : ''} ${k.length > 2 ? 'w-[27px]' : 'w-5'}`}>{k}</div>
            <span className={`ml-[3px] whitespace-nowrap ${t === 'Simulation' ? 'tracking-[-0.8px]' : 'tracking-[-0.6px]'}`}>{t}</span>
          </div>
        ))}
      </div>

      <div className="flex h-[23px] shrink-0 gap-[3px] border-t border-[#808080] pt-0.5 text-[12px]">
        <div className="w-[1208px] border border-[#808080] border-r-white border-b-white" />
        <div className="flex flex-1 items-center border border-[#808080] border-r-white border-b-white pl-px tracking-[-0.45px] whitespace-nowrap">AST-3301B</div>
      </div>

      <div className={`${SERIF} flex h-[30px] shrink-0 items-center border-t border-white pl-0.5 text-[12px]`}>
        <div className={`flex h-[22px] w-[47px] items-center pl-0.5 ${RAISED}`}>
          <Svg><path d="M1 3c2-2 4-1 6 0l-1 5c-2-1-4-1-6 0z" fill="#ec5326" /><path d="M8 3c2 1 5 1 7 0l-1 5c-2 1-5 1-7 0z" fill="#75b933" /><path d="M0 9c2-1 4-1 6 0l-1 5c-2-1-4-1-6 0z" fill="#3981dd" /><path d="M7 9c2 1 5 1 7 0l-1 5c-2 1-5 1-7 0z" fill="#f4c32c" /></Svg>
          <span className="ml-0.5 tracking-[-0.2px] whitespace-nowrap">開始</span>
        </div>
        <div className="flex w-[415px] shrink-0 gap-[7px] pl-2">{quick.map((q, i) => <React.Fragment key={i}>{q}</React.Fragment>)}</div>
        <div className="flex shrink-0 gap-[3px]">
          {tasks.map(([ic, t, on]) => (
            <div key={t} className={`flex h-[22px] w-[101px] items-center gap-1 pl-[3px] whitespace-nowrap ${on ? `border border-t-black border-l-black border-r-white border-b-white tracking-[-0.25px] ${DITHER}` : RAISED}`}>{ic}<span>{t}</span></div>
          ))}
        </div>
        <div className="ml-[11px]"><Svg><path d="M5 1v3h6v2" stroke="#333" /><path d="M1 6h14l1 8H0z" fill="#eee" stroke="#333" /><path d="M2 8h12M2 10h12M3 12.500h10" stroke="#333" strokeDasharray="1.500 1" /></Svg></div>
        <div className="ml-[2px] flex h-6 w-[268px] items-center gap-[2px] border border-[#808080] border-r-white border-b-white pl-0.5">
          {tray.map((q, i) => <React.Fragment key={i}>{q}</React.Fragment>)}
          <span className="ml-1 text-[13px] tracking-[-0.4px] whitespace-nowrap">上午 11:22</span>
        </div>
      </div>
    </div>
  );
}
